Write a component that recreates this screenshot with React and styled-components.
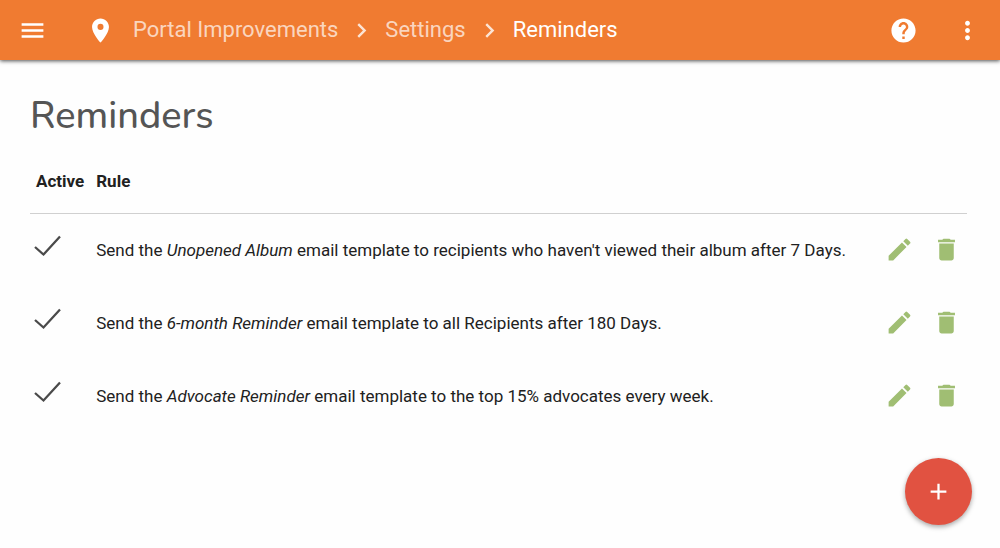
import styled, { createGlobalStyle } from 'styled-components';
import { MdAdd, MdChevronRight, MdDelete, MdEdit, MdHelp, MdMenu, MdMoreVert, MdPlace } from 'react-icons/md';

const GlobalStyle = createGlobalStyle`
    * {
        box-sizing: border-box;
    }
    body {
        margin: 0;
        background-color: #fefefe;
        color: #212121;
        font-family: Roboto, sans-serif;
        font-size: 17px;
    }
`;

const Header = styled.header`
    display: flex;
    align-items: center;
    height: 60px;
    padding: 0 18px;
    background-color: #f07b31;
    color: white;
    box-shadow: 0 1px 4px rgba(0, 0, 0, 0.7);
`;

const IconButton = styled.button`
    display: flex;
    padding: 0;
    border: none;
    background: none;
    color: ${(props) => props.$color || 'white'};
    font-size: 29px;
    cursor: pointer;
`;

const Breadcrumbs = styled.nav`
    display: flex;
    align-items: center;
    flex: 1;
    margin-left: 39px;
    font-size: 22px;
    line-height: 28px;
`;

const Place = styled(MdPlace)`
    margin-right: 18px;
    font-size: 29px;
`;

const Crumb = styled.a`
    color: ${(props) => (props.$current ? 'white' : 'rgba(255, 255, 255, 0.7)')};
    text-decoration: none;
`;

const Separator = styled(MdChevronRight)`
    margin: 0 9px;
    font-size: 29px;
    opacity: 0.8;
`;

const Tools = styled.div`
    display: flex;
    gap: 35px;
`;

const Main = styled.main`
    padding: 30px 33px 30px 30px;
`;

const Title = styled.h1`
    margin: 0;
    color: #555;
    font-family: Nunito, Lato, sans-serif;
    font-size: 38px;
    font-weight: 500;
    line-height: 52px;
`;

const Table = styled.table`
    width: 100%;
    margin-top: 8px;
    border-collapse: collapse;
`;

const HeadCell = styled.th`
    height: 63px;
    padding: 0 6px;
    border-bottom: 1px solid #d0d0d0;
    text-align: left;
    font-weight: 700;
`;

const Cell = styled.td`
    height: 73px;
    padding: 0 6px;
`;

const ActiveCell = styled(Cell)`
    width: 60px;
    padding: 0 4px 8px;
`;

const Check = styled.svg`
    display: block;
    width: 28px;
    height: 22px;
    fill: none;
    stroke: #4a4a4a;
    stroke-width: 2.3;
`;

const Actions = styled.div`
    display: flex;
    justify-content: flex-end;
    gap: 18px;
`;

const AddButton = styled.button`
    position: fixed;
    right: 28px;
    bottom: 23px;
    display: flex;
    align-items: center;
    justify-content: center;
    width: 67px;
    height: 67px;
    padding: 0;
    border: none;
    border-radius: 50%;
    background-color: #e15241;
    color: white;
    font-size: 27px;
    box-shadow: 0 2px 5px rgba(0, 0, 0, 0.35);
    cursor: pointer;
`;

const reminders = [
    { id: 1, template: 'Unopened Album', rest: "email template to recipients who haven't viewed their album after 7 Days." },
    { id: 2, template: '6-month Reminder', rest: 'email template to all Recipients after 180 Days.' },
    { id: 3, template: 'Advocate Reminder', rest: 'email template to the top 15% advocates every week.' },
];

const NavBar = () => {
    return (
        <Header>
            <IconButton aria-label='Menu'>
                <MdMenu />
            </IconButton>
            <Breadcrumbs aria-label='Breadcrumb'>
                <Place />
                <Crumb href='#portal'>Portal Improvements</Crumb>
                <Separator />
                <Crumb href='#settings'>Settings</Crumb>
                <Separator />
                <Crumb href='#reminders' aria-current='page' $current>
                    Reminders
                </Crumb>
            </Breadcrumbs>
            <Tools>
                <IconButton aria-label='Help'>
                    <MdHelp />
                </IconButton>
                <IconButton aria-label='More options'>
                    <MdMoreVert />
                </IconButton>
            </Tools>
        </Header>
    );
};

const App = () => {
    return (
        <>
            <GlobalStyle />
            <NavBar />
            <Main>
                <Title>Reminders</Title>
                <Table>
                    <thead>
                        <tr>
                            <HeadCell>Active</HeadCell>
                            <HeadCell>Rule</HeadCell>
                            <HeadCell aria-label='Actions' />
                        </tr>
                    </thead>
                    <tbody>
                        {reminders.map((item) => (
                            <tr key={item.id}>
                                <ActiveCell>
                                    <Check viewBox='0 0 28 22' role='img' aria-label='Active'>
                                        <path d='M1 12L9.5 19.5L26 1.5' />
                                    </Check>
                                </ActiveCell>
                                <Cell>
                                    Send the <em>{item.template}</em> {item.rest}
                                </Cell>
                                <Cell>
                                    <Actions>
                                        <IconButton aria-label='Edit' $color='#a0be73'>
                                            <MdEdit />
                                        </IconButton>
                                        <IconButton aria-label='Delete' $color='#a0be73'>
                                            <MdDelete />
                                        </IconButton>
                                    </Actions>
                                </Cell>
                            </tr>
                        ))}
                    </tbody>
                </Table>
            </Main>
            <AddButton aria-label='Add reminder'>
                <MdAdd />
            </AddButton>
        </>
    );
};

export default App;
